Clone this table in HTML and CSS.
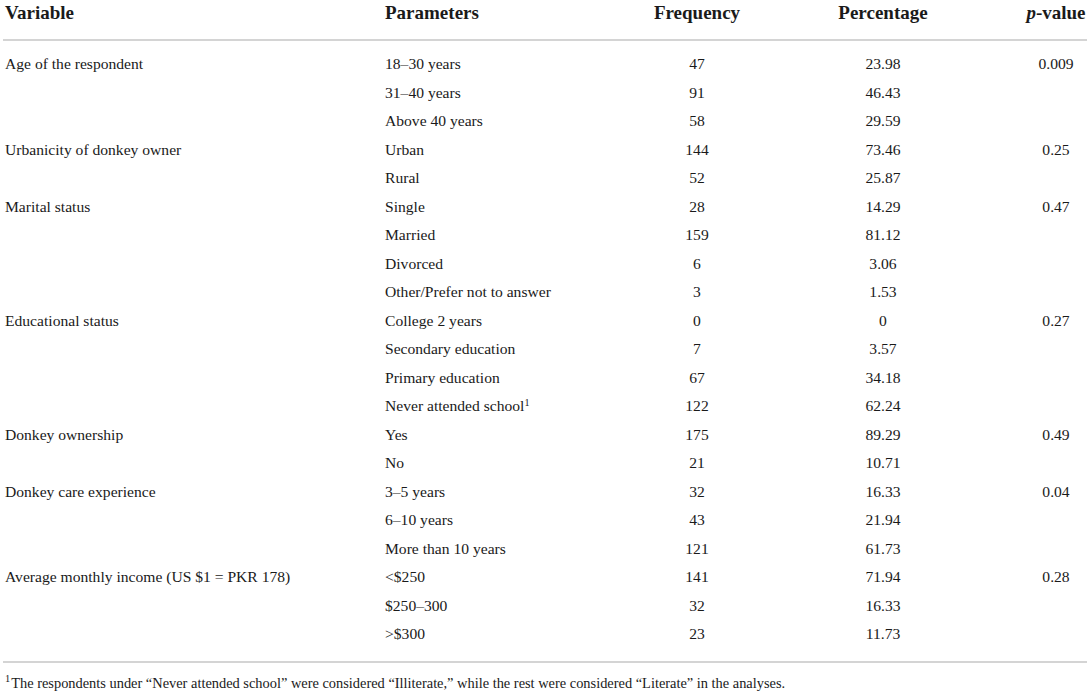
FILE: index.html
```html
<!DOCTYPE html>
<html lang="en">
<head>
  <meta charset="UTF-8" />
  <title>Sociodemographic characteristics of donkey owners</title>
  <meta name="viewport" content="width=device-width, initial-scale=1.0">
  <link rel="stylesheet" href="styles.css">
</head>
<body>
  <table class="data">
    <colgroup>
      <col class="c-var"><col class="c-par"><col class="c-freq"><col class="c-pct"><col class="c-p">
    </colgroup>
    <thead>
      <tr>
        <th class="left">Variable</th>
        <th class="left">Parameters</th>
        <th>Frequency</th>
        <th>Percentage</th>
        <th class="pval"><i>p</i>-value</th>
      </tr>
    </thead>
    <tbody>
      <tr><td class="left">Age of the respondent</td><td class="left">18–30 years</td><td>47</td><td>23.98</td><td class="pval">0.009</td></tr>
      <tr><td class="left"></td><td class="left">31–40 years</td><td>91</td><td>46.43</td><td class="pval"></td></tr>
      <tr><td class="left"></td><td class="left">Above 40 years</td><td>58</td><td>29.59</td><td class="pval"></td></tr>
      <tr><td class="left">Urbanicity of donkey owner</td><td class="left">Urban</td><td>144</td><td>73.46</td><td class="pval">0.25</td></tr>
      <tr><td class="left"></td><td class="left">Rural</td><td>52</td><td>25.87</td><td class="pval"></td></tr>
      <tr><td class="left">Marital status</td><td class="left">Single</td><td>28</td><td>14.29</td><td class="pval">0.47</td></tr>
      <tr><td class="left"></td><td class="left">Married</td><td>159</td><td>81.12</td><td class="pval"></td></tr>
      <tr><td class="left"></td><td class="left">Divorced</td><td>6</td><td>3.06</td><td class="pval"></td></tr>
      <tr><td class="left"></td><td class="left">Other/Prefer not to answer</td><td>3</td><td>1.53</td><td class="pval"></td></tr>
      <tr><td class="left">Educational status</td><td class="left">College 2 years</td><td>0</td><td>0</td><td class="pval">0.27</td></tr>
      <tr><td class="left"></td><td class="left">Secondary education</td><td>7</td><td>3.57</td><td class="pval"></td></tr>
      <tr><td class="left"></td><td class="left">Primary education</td><td>67</td><td>34.18</td><td class="pval"></td></tr>
      <tr><td class="left"></td><td class="left">Never attended school<sup>1</sup></td><td>122</td><td>62.24</td><td class="pval"></td></tr>
      <tr><td class="left">Donkey ownership</td><td class="left">Yes</td><td>175</td><td>89.29</td><td class="pval">0.49</td></tr>
      <tr><td class="left"></td><td class="left">No</td><td>21</td><td>10.71</td><td class="pval"></td></tr>
      <tr><td class="left">Donkey care experience</td><td class="left">3–5 years</td><td>32</td><td>16.33</td><td class="pval">0.04</td></tr>
      <tr><td class="left"></td><td class="left">6–10 years</td><td>43</td><td>21.94</td><td class="pval"></td></tr>
      <tr><td class="left"></td><td class="left">More than 10 years</td><td>121</td><td>61.73</td><td class="pval"></td></tr>
      <tr><td class="left">Average monthly income (US $1 = PKR 178)</td><td class="left">&lt;$250</td><td>141</td><td>71.94</td><td class="pval">0.28</td></tr>
      <tr><td class="left"></td><td class="left">$250–300</td><td>32</td><td>16.33</td><td class="pval"></td></tr>
      <tr><td class="left"></td><td class="left">&gt;$300</td><td>23</td><td>11.73</td><td class="pval"></td></tr>
    </tbody>
  </table>
  <p class="footnote"><sup>1</sup>The respondents under “Never attended school” were considered “Illiterate,” while the rest were considered “Literate” in the analyses.</p>
</body>
</html>
```

FILE: styles.css
```css
body {
  margin: 0;
  background: #fff;
  color: #1a1a1a;
  font-family: 'Liberation Serif', 'Times New Roman', serif;
}
.data {
  width: 1084px;
  margin-left: 3px;
  table-layout: fixed;
  border-collapse: collapse;
}
.c-var { width: 380px; }
.c-par { width: 225px; }
.c-freq { width: 176px; }
.c-pct { width: 196px; }
.c-p { width: 107px; }
th, td {
  padding: 0 0 0 2px;
  text-align: center;
  white-space: nowrap;
}
.left {
  text-align: left;
}
.pval {
  padding-left: 45px;
}
th {
  font-size: 19px;
  font-weight: bold;
  line-height: 26px;
  padding-bottom: 13px;
  border-bottom: 2px solid #d4d4d4;
}
td {
  font-size: 15.6px;
  line-height: 28.5px;
}
tbody tr:first-child td {
  padding-top: 9px;
}
tbody tr:last-child td {
  padding-bottom: 12px;
  border-bottom: 2px solid #d4d4d4;
}
sup {
  font-size: 0.65em;
  line-height: 0;
  vertical-align: 0.5em;
}
.footnote {
  margin: 10px 0 0 5px;
  font-size: 14.4px;
  line-height: 20px;
}
.footnote sup {
  font-size: 0.72em;
  margin-right: 1px;
}
```
